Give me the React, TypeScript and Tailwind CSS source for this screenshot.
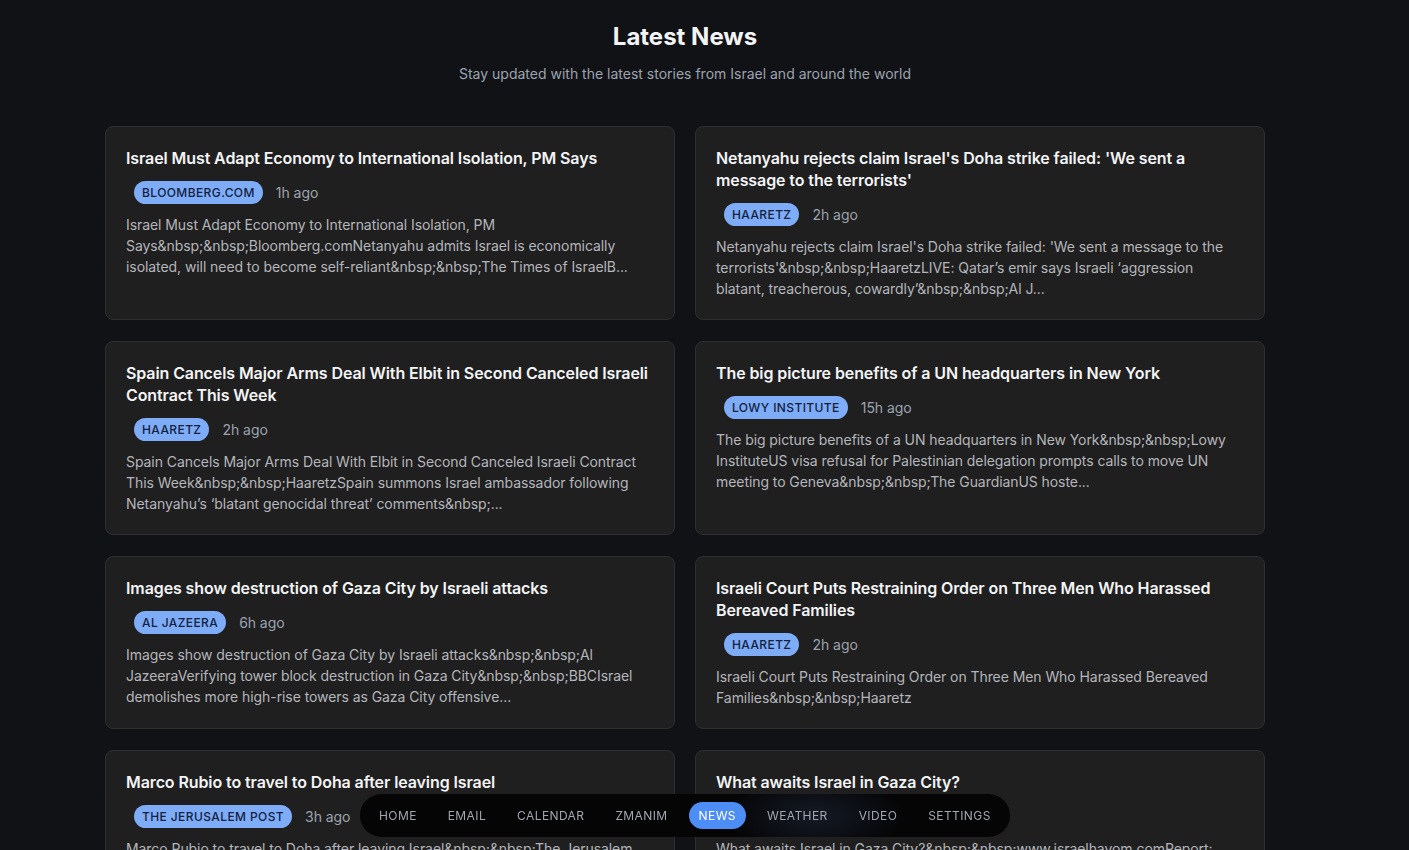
import React from "react";

const Articles = [
  {
    title: "Israel Must Adapt Economy to International Isolation, PM Says",
    source: "Bloomberg.com",
    time: "1h ago",
    desc: "Israel Must Adapt Economy to International Isolation, PM Says&nbsp;&nbsp;Bloomberg.comNetanyahu admits Israel is economically isolated, will need to become self-reliant&nbsp;&nbsp;The Times of IsraelB...",
  },
  {
    title: "Netanyahu rejects claim Israel's Doha strike failed: 'We sent a message to the terrorists'",
    source: "Haaretz",
    time: "2h ago",
    desc: "Netanyahu rejects claim Israel's Doha strike failed: 'We sent a message to the terrorists'&nbsp;&nbsp;HaaretzLIVE: Qatar\u2019s emir says Israeli \u2018aggression blatant, treacherous, cowardly\u2019&nbsp;&nbsp;Al J...",
  },
  {
    title: "Spain Cancels Major Arms Deal With Elbit in Second Canceled Israeli Contract This Week",
    source: "Haaretz",
    time: "2h ago",
    desc: "Spain Cancels Major Arms Deal With Elbit in Second Canceled Israeli Contract This Week&nbsp;&nbsp;HaaretzSpain summons Israel ambassador following Netanyahu\u2019s \u2018blatant genocidal threat\u2019 comments&nbsp;...",
  },
  {
    title: "The big picture benefits of a UN headquarters in New York",
    source: "Lowy Institute",
    time: "15h ago",
    desc: "The big picture benefits of a UN headquarters in New York&nbsp;&nbsp;Lowy InstituteUS visa refusal for Palestinian delegation prompts calls to move UN meeting to Geneva&nbsp;&nbsp;The GuardianUS hoste...",
  },
  {
    title: "Images show destruction of Gaza City by Israeli attacks",
    source: "Al Jazeera",
    time: "6h ago",
    desc: "Images show destruction of Gaza City by Israeli attacks&nbsp;&nbsp;Al JazeeraVerifying tower block destruction in Gaza City&nbsp;&nbsp;BBCIsrael demolishes more high-rise towers as Gaza City offensive...",
  },
  {
    title: "Israeli Court Puts Restraining Order on Three Men Who Harassed Bereaved Families",
    source: "Haaretz",
    time: "2h ago",
    desc: "Israeli Court Puts Restraining Order on Three Men Who Harassed Bereaved Families&nbsp;&nbsp;Haaretz",
  },
  {
    title: "Marco Rubio to travel to Doha after leaving Israel",
    source: "The Jerusalem Post",
    time: "3h ago",
    desc: "Marco Rubio to travel to Doha after leaving Israel&nbsp;&nbsp;The Jerusalem Post...",
  },
  {
    title: "What awaits Israel in Gaza City?",
    source: "Israel Hayom",
    time: "4h ago",
    desc: "What awaits Israel in Gaza City?&nbsp;&nbsp;www.israelhayom.comReport: ...",
  },
];

const NavItems = ["Home", "Email", "Calendar", "Zmanim", "News", "Weather", "Video", "Settings"];

function NewsCard({ a }: { a: (typeof Articles)[number] }) {
  return (
    <div className="rounded-lg border border-[#2f2f31] bg-[#1f1f1f] px-5 pt-5 pb-5">
      <h3 className="text-[16px] leading-[22px] font-semibold tracking-[-0.1px] text-[#f3f4f6]">{a.title}</h3>
      <div className="mt-[12px] flex items-center gap-[13px] pl-2">
        <span className="rounded-full bg-[#7eacf7] px-2 py-[4px] text-[12px] leading-[15px] font-medium tracking-[0.4px] text-[#13213d] uppercase">
          {a.source}
        </span>
        <span className="text-[14px] tracking-[-0.05px] text-[#9ca3af]">{a.time}</span>
      </div>
      <p className="mt-[10px] text-[14px] leading-[21px] tracking-[-0.07px] text-[#b4b6bb]">{a.desc}</p>
    </div>
  );
}

export default function App() {
  return (
    <div
      className="min-h-screen bg-[#111216] pr-[39px] pb-24"
      style={{ fontFamily: "Inter, 'Noto Sans', sans-serif" }}
    >
      <div className="mx-auto w-[1160px]">
        <header className="pt-[21px] pb-[42px] text-center">
          <h1 className="text-[24px] leading-[32px] font-bold text-[#f3f4f6]">Latest News</h1>
          <p className="mt-[11px] text-[14px] leading-[20px] text-[#9ca3af]">
            Stay updated with the latest stories from Israel and around the world
          </p>
        </header>
        <div className="grid grid-cols-2 gap-x-5 gap-y-[21px]">
          {Articles.map((a) => (
            <NewsCard key={a.title} a={a} />
          ))}
        </div>
      </div>

      <nav className="fixed bottom-[13px] left-[360px] flex items-center gap-[11px] rounded-full bg-[radial-gradient(ellipse_90px_40px_at_70%_50%,#151a26_0%,#050506_100%)] px-[9px] py-2">
        {NavItems.map((item) =>
          item === "News" ? (
            <span
              key={item}
              className="rounded-full bg-[#4d8ef6] px-2.5 py-[6px] text-[12px] leading-[15px] tracking-[0.4px] text-white uppercase"
            >
              {item}
            </span>
          ) : (
            <span
              key={item}
              className="px-2.5 py-[6px] text-[12px] leading-[15px] tracking-[0.4px] text-[#a3a6ad] uppercase"
            >
              {item}
            </span>
          )
        )}
      </nav>
    </div>
  );
}
